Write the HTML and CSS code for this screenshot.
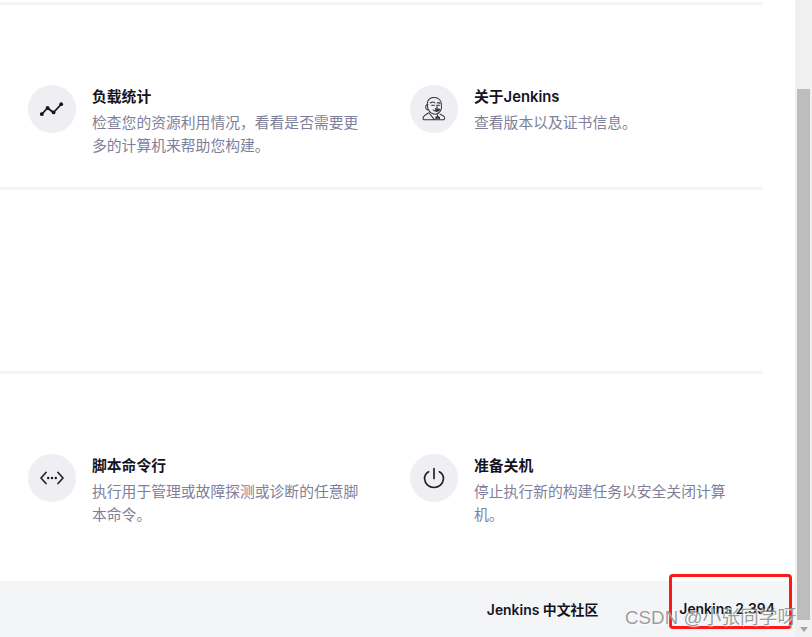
FILE: index.html
```html
<!DOCTYPE html>
<html lang="zh-CN">
<head>
<meta charset="utf-8">
<title>Jenkins 系统管理</title>
<link rel="stylesheet" href="styles.css">
</head>
<body>
<div class="page">
  <main class="content">
    <div class="sections">
      <section class="section section-stats">
        <div class="grid">
          <article class="item">
            <div class="icon">
              <svg viewBox="0 0 24 24" width="24" height="24"><path class="st" d="M1.5 17.5 L7.5 11 L13.5 15.5 L21.5 7"/><circle class="dot" cx="1.8" cy="17.2" r="1.9"/><circle class="dot" cx="7.6" cy="11" r="1.9"/><circle class="dot" cx="13.6" cy="15.4" r="1.9"/><circle class="dot" cx="21.2" cy="7.2" r="1.9"/></svg>
            </div>
            <div class="text">
              <h3>负载统计</h3>
              <p>检查您的资源利用情况，看看是否需要更多的计算机来帮助您构建。</p>
            </div>
          </article>
          <article class="item">
            <div class="icon">
              <svg viewBox="0 0 26 28" width="24" height="26"><path class="thin" d="M6.5 14 C4.5 9 5.5 2.5 12 1.6 C18 1 21.5 5 21 10 C21.3 12 21.5 13.5 20.5 15 C19.5 17.5 18 19 15.5 19.5 C11.5 20 8.5 18 6.5 14 Z"/><path class="thin" d="M6.5 9.5 C4.5 9 3.6 11 4.2 13 C4.8 14.6 6 15 7 14.5"/><path class="thin" d="M9 7.5 C11 6 13 6.5 14 7.5 M16.5 7.5 C17.5 7 18.8 7 19.5 8 M10.5 10 L13.5 10 M16.5 10 L19 10 M16 10 L16.5 13 L14.5 13.5 M12 15 C14 17 17 16.5 19.5 14.5"/><path class="fill" d="M14 14.6 C16 13.6 18.5 13.2 19.5 14 C19.4 16 17.4 17.3 15.6 17 C14.8 16.6 14.2 15.6 14 14.6 Z"/><path class="thin" d="M7.5 18 C5.5 19.5 2.5 20.5 1.5 22.5 C1 24 1 25.5 2 25.6 L23.5 25.6 C24.8 25.5 24.8 23.5 24 22.3 C23 21 21 20.5 19.5 19.5 M7.5 18 L13 25 M16.5 19.8 L17 22"/><path class="fill" d="M14.5 22.5 L17 21.5 L19.5 22.8 L19.5 25 L17 24.2 L14.5 25.4 Z"/></svg>
            </div>
            <div class="text">
              <h3>关于Jenkins</h3>
              <p>查看版本以及证书信息。</p>
            </div>
          </article>
        </div>
      </section>
      <section class="section section-empty"></section>
      <section class="section section-tools">
        <div class="grid">
          <article class="item">
            <div class="icon">
              <svg viewBox="0 0 24 24" width="24" height="24"><path class="st-thin" d="M6 6.5 L1 12 L6 17.5 M18 6.5 L23 12 L18 17.5"/><circle class="dot" cx="8.2" cy="12" r="1.2"/><circle class="dot" cx="12" cy="12" r="1.2"/><circle class="dot" cx="15.8" cy="12" r="1.2"/></svg>
            </div>
            <div class="text">
              <h3>脚本命令行</h3>
              <p>执行用于管理或故障探测或诊断的任意脚本命令。</p>
            </div>
          </article>
          <article class="item">
            <div class="icon">
              <svg viewBox="0 0 24 24" width="24" height="24"><path class="st-thin" d="M12 2.5 L12 12.5 M6.6 5.8 C3.5 7.6 2.4 10.4 2.6 13 C3 18 7 21.5 12 21.5 C17 21.5 21 18 21.4 13 C21.6 10.4 20.5 7.6 17.4 5.8"/></svg>
            </div>
            <div class="text">
              <h3>准备关机</h3>
              <p>停止执行新的构建任务以安全关闭计算机。</p>
            </div>
          </article>
        </div>
      </section>
    </div>
    <footer class="footer">
      <a class="footer-link">Jenkins 中文社区</a>
      <a class="footer-link">Jenkins 2.394</a>
    </footer>
  </main>
  <aside class="scrollbar">
    <div class="thumb"></div>
    <div class="arrow"></div>
  </aside>
  <div class="highlight"></div>
  <div class="watermark">CSDN @小张同学呀</div>
</div>
</body>
</html>
```
FILE: styles.css
```css
* { box-sizing: border-box; }
html, body { margin: 0; padding: 0; background: #fff; }
body { font-family: Inter, "Noto Sans CJK SC", sans-serif; color: #14141f; overflow: hidden; }

.page { position: relative; display: flex; width: 812px; height: 637px; overflow: hidden; }
.content { width: 795px; display: flex; flex-direction: column; justify-content: space-between; }
.sections { padding-top: 1.5px; }

.section { width: 763px; border-top: 3px solid #f4f4f8; }
.section-stats { height: 185px; padding: 80.5px 0 0 28px; }
.section-empty { height: 184px; }
.section-tools { padding: 80.5px 0 0 28px; }

.grid { display: grid; grid-template-columns: 382px 340px; }
.item { display: flex; gap: 16px; }
.icon { width: 48px; height: 48px; flex: none; border-radius: 50%; background: #eeeef3; display: flex; align-items: center; justify-content: center; }
.text { width: 272px; }
.text h3 { margin: 0; font-size: 14.8px; line-height: 24px; font-weight: 600; color: #14141f; }
.text p { margin: 3px 0 0; font-size: 14.8px; line-height: 23px; color: #7f7f9b; }

.st { fill: none; stroke: #14141f; stroke-width: 1.8; stroke-linejoin: round; }
.st-thin { fill: none; stroke: #22222e; stroke-width: 1.7; stroke-linecap: round; stroke-linejoin: round; }
.dot { fill: #14141f; }
.thin { fill: none; stroke: #33333f; stroke-width: 1.1; stroke-linecap: round; stroke-linejoin: round; }
.fill { fill: #33333f; }

.footer { height: 56px; background: #f4f5f7; display: flex; justify-content: flex-end; align-items: center; gap: 81px; padding: 0 20px 0 0; }
.footer-link { font-size: 13.9px; font-weight: 600; color: #14141f; white-space: nowrap; }

.scrollbar { width: 17px; height: 637px; background: #f0f0f0; position: relative; padding: 89px 2px 0; }
.thumb { height: 531px; background: #bdbdbd; }
.arrow { width: 0; height: 0; margin: 7px auto 0; border-left: 4px solid transparent; border-right: 4px solid transparent; border-top: 5px solid #a3a3a3; }

.highlight { position: absolute; left: 669px; top: 574px; width: 123px; height: 55px; border: 3px solid #fb1a1a; border-radius: 4px; }
.watermark { position: absolute; left: 625px; top: 607px; font-family: "Liberation Sans", "Noto Sans CJK SC", sans-serif; font-size: 18.8px; line-height: 22px; color: rgba(125,125,125,.75); text-shadow: 1px 1px 1px rgba(255,255,255,.8); white-space: nowrap; }
```
